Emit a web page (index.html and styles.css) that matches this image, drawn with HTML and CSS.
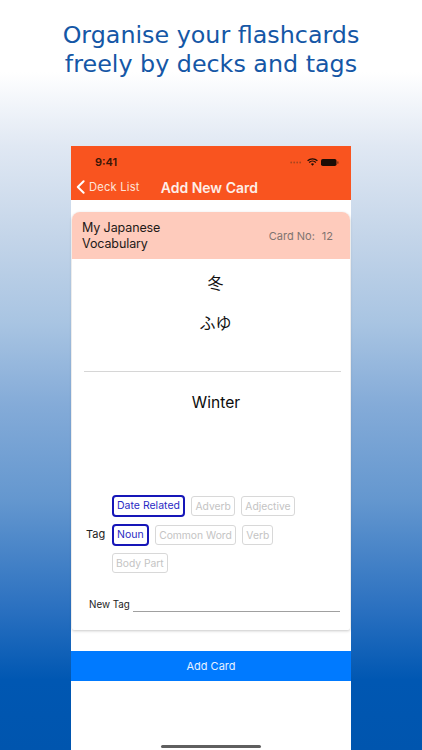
FILE: index.html
```html
<!DOCTYPE html>
<html lang="en">
<head>
<meta charset="utf-8">
<title>Add New Card</title>
<link rel="stylesheet" href="styles.css">
</head>
<body>
<div class="page">
  <h1 class="headline">Organise your flashcards<br>freely by decks and tags</h1>
  <main class="phone">
    <header class="nav">
      <div class="status">
        <span class="time">9:41</span>
        <div class="status-icons">
          <svg class="signal" width="14" height="3" viewBox="0 0 14 3"><g fill="#a8461f"><circle cx="1.2" cy="1.5" r=".9"/><circle cx="4.2" cy="1.5" r=".9"/><circle cx="7.2" cy="1.5" r=".9"/><circle cx="10.2" cy="1.5" r=".9"/></g></svg>
          <svg width="11" height="8" viewBox="0 0 11 8"><path d="M.6 2.8a7 7 0 0 1 9.8 0M2.2 4.5a4.7 4.7 0 0 1 6.6 0" fill="none" stroke="#1c0d06" stroke-width="1.3"/><path d="M3.9 6a2.3 2.3 0 0 1 3.2 0L5.5 7.8z" fill="#1c0d06"/></svg>
          <svg width="18" height="7" viewBox="0 0 18 7"><rect width="15.5" height="7" rx="1.8" fill="#1c0d06"/><rect x="16.2" y="2.2" width="1.3" height="2.6" rx=".6" fill="#7a3315"/></svg>
        </div>
      </div>
      <div class="navbar">
        <div class="back">
          <svg width="9" height="14" viewBox="0 0 9 14"><path d="M7.6 1.2 1.8 7l5.8 5.8" fill="none" stroke="#fff" stroke-width="2" stroke-linecap="round" stroke-linejoin="round"/></svg>
          <span>Deck List</span>
        </div>
        <div class="nav-title">Add New Card</div>
      </div>
    </header>
    <section class="card">
      <div class="card-head">
        <div class="deck">My Japanese<br>Vocabulary</div>
        <div class="cardno"><span>Card No:</span><span>12</span></div>
      </div>
      <div class="front">
        <div class="kanji">冬</div>
        <div class="kana">ふゆ</div>
      </div>
      <div class="meaning">Winter</div>
      <div class="tags">
        <div class="tag-label">Tag</div>
        <div class="tag-rows">
          <div class="tag-row"><span class="tag on">Date Related</span><span class="tag">Adverb</span><span class="tag">Adjective</span></div>
          <div class="tag-row"><span class="tag on">Noun</span><span class="tag">Common Word</span><span class="tag">Verb</span></div>
          <div class="tag-row"><span class="tag">Body Part</span></div>
        </div>
      </div>
      <div class="new-tag"><span class="new-tag-label">New Tag</span><div class="line"></div></div>
    </section>
    <div class="add-btn">Add Card</div>
    <div class="home"></div>
  </main>
</div>
</body>
</html>
```
FILE: styles.css
```css
html, body { margin: 0; padding: 0; }
body { width: 422px; height: 750px; overflow: hidden; font-family: "Inter", "Liberation Sans", sans-serif; }
.page {
  width: 422px; height: 750px; overflow: hidden; display: flex; flex-direction: column; align-items: center;
  background: linear-gradient(180deg, #fff 0, #fff 72px, #e0e8f3 146px, #c4d5e9 236px, #a8c4e2 324px, #84abd8 405px, #6497cf 500px, #2a70c0 610px, #0057b2 680px, #0055ae 750px);
}
.headline {
  margin: 0; padding-top: 21px; height: 146px; box-sizing: border-box; flex: none;
  font-family: "DejaVu Sans", sans-serif; font-weight: 400; font-size: 23.8px; line-height: 29px;
  color: #1557a6; text-align: center;
}
.phone { width: 280px; height: 604px; background: #fff; display: flex; flex-direction: column; position: relative; flex: none; }
.nav { height: 54px; background: #f9541f; color: #fff; flex: none; }
.status { height: 32px; display: flex; justify-content: space-between; align-items: flex-start; padding: 9px 12px 0 24px; box-sizing: border-box; }
.time { font-size: 11px; font-weight: 600; color: #3a1607; line-height: 14px; }
.status-icons { display: flex; align-items: center; gap: 3px; padding-top: 3px; }
.navbar { display: flex; align-items: center; height: 18px; padding-left: 5px; position: relative; }
.back { display: flex; align-items: center; gap: 4px; font-size: 11.2px; color: #fde3d8; font-weight: 400; letter-spacing: .2px; }
.nav-title { font-size: 14px; font-weight: 600; margin-left: 21px; color: #fdeee8; }
.card {
  margin: 12px 1px 0; height: 418px; background: #fff; border-radius: 8px 8px 2px 2px; flex: none;
  box-shadow: 0 1px 3px rgba(0,0,0,.22); display: flex; flex-direction: column;
}
.card-head { height: 47px; background: #fecbbc; border-radius: 8px 8px 0 0; display: flex; align-items: center; justify-content: space-between; padding: 1px 17px 0 10px; box-sizing: border-box; flex: none; }
.deck { font-size: 12.5px; line-height: 16px; color: #1f1a18; letter-spacing: -.1px; }
.cardno { display: flex; gap: 7px; font-size: 11px; color: #807470; }
.front { height: 113px; margin: 0 9px 0 12px; padding-left: 6px; border-bottom: 1px solid #d6d6d6; text-align: center; color: #111; flex: none; box-sizing: border-box; font-family: "Noto Sans CJK JP", sans-serif; font-size: 16px; }
.kanji { padding-top: 11px; line-height: 24px; }
.kana { padding-top: 16px; line-height: 24px; }
.meaning { height: 123px; padding-top: 20px; padding-left: 10px; box-sizing: border-box; text-align: center; font-size: 15.6px; line-height: 22px; color: #0c0c0c; flex: none; }
.tags { display: flex; align-items: center; padding-left: 14px; flex: none; }
.tag-label { font-size: 11px; color: #222; width: 26px; flex: none; }
.tag-rows { display: flex; flex-direction: column; gap: 7px; }
.tag-row { display: flex; gap: 6.5px; align-items: center; }
.tag { font-size: 10.3px; line-height: 14px; padding: 2px 3px; border: 1px solid #d8d8d8; border-radius: 3px; color: #c4c4c4; }
.tag.on { border: 2px solid #1616b8; color: #2a2ac4; font-size: 10.5px; padding: 2px 3px; border-radius: 4px; }
.new-tag { display: flex; align-items: flex-end; gap: 3px; padding: 0 10px 0 17px; margin-top: 26px; font-size: 9.8px; color: #222; flex: none; }
.new-tag-label { margin-bottom: 2px; }
.line { flex: 1; border-bottom: 1px solid #a0a0a0; height: 12px; }
.add-btn { margin-top: 21px; height: 30px; background: #007aff; color: #e6f1ff; display: flex; align-items: center; justify-content: center; font-size: 11px; flex: none; }
.home { position: absolute; left: 90px; bottom: 2px; width: 100px; height: 3px; border-radius: 2px; background: #5f5f5f; }
```
